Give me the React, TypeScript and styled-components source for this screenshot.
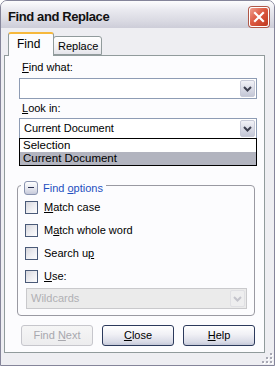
import React from 'react';
import styled, { createGlobalStyle } from 'styled-components';

const GlobalStyle = createGlobalStyle`
  html, body { margin: 0; padding: 0; background: #ffffff; }
  body { font-family: "Liberation Sans", Arial, sans-serif; font-size: 11px; color: #000; }
  * { box-sizing: border-box; }
`;

const Window = styled.div`
  width: 275px;
  height: 366px;
  border: 1px solid #85859a;
  border-radius: 7px 7px 0 0;
  background: #ececf0;
  display: flex;
  flex-direction: column;
  overflow: hidden;
`;

const TitleBar = styled.div`
  height: 27px;
  flex: none;
  display: flex;
  align-items: center;
  justify-content: space-between;
  padding: 4px 5px 0 7px;
  background: linear-gradient(#fdfdfe 0%, #e9e9ef 35%, #d9d9e2 75%, #cdcdd8 100%);
`;

const Title = styled.span`
  font-family: "Liberation Sans", Arial, sans-serif;
  font-weight: bold;
  font-size: 13px;
  letter-spacing: -0.4px;
  color: #111;
`;

const CloseButton = styled.div`
  width: 20px;
  height: 20px;
  border-radius: 3px;
  border: 1px solid #ffffff;
  box-shadow: 0 0 0 1px #b05848;
  background: linear-gradient(135deg, #f0a090 0%, #dd5a42 45%, #c0381e 100%);
  display: flex;
  align-items: center;
  justify-content: center;
`;

const Body = styled.div`
  flex: 1;
  display: flex;
  flex-direction: column;
  padding: 4px 9px 0 3px;
  background: #eeeef2;
`;

const TabRow = styled.div`
  height: 23px;
  flex: none;
  display: flex;
  align-items: flex-start;
  padding-left: 4px;
  position: relative;
  z-index: 1;
`;

const Tab = styled.div<{ $active?: boolean }>`
  height: ${(p) => (p.$active ? '24px' : '19px')};
  margin-top: ${(p) => (p.$active ? '0' : '4px')};
  margin-left: ${(p) => (p.$active ? '0' : '-1px')};
  width: ${(p) => (p.$active ? '46px' : '49px')};
  border: 1px solid #919b9c;
  border-bottom: ${(p) => (p.$active ? 'none' : '1px solid #919b9c')};
  border-top: ${(p) => (p.$active ? '2px solid #f6b83c' : '1px solid #919b9c')};
  border-radius: 3px 3px 0 0;
  background: ${(p) => (p.$active ? '#fcfcfe' : 'linear-gradient(#ffffff, #f2f2f4 60%, #e4e4ea)')};
  padding: ${(p) => (p.$active ? '4px 0 0 8px' : '3px 0 0 4px')};
  font-size: ${(p) => (p.$active ? '12px' : '11px')};
  line-height: 13px;
  position: relative;
  z-index: ${(p) => (p.$active ? 2 : 1)};
`;

const Panel = styled.div`
  flex: 1;
  border: 1px solid #919b9c;
  background: #fcfcfe;
  display: flex;
  flex-direction: column;
  padding: 5px 0 0 12px;
`;

const FieldLabel = styled.div<{ $top?: number }>`
  margin-left: 5px;
  margin-top: ${(p) => p.$top ?? 0}px;
  height: 13px;
  line-height: 13px;
`;

const Combo = styled.div<{ $disabled?: boolean; $top: number; $indent: number; $width: number }>`
  position: relative;
  width: ${(p) => p.$width}px;
  height: 21px;
  margin-top: ${(p) => p.$top}px;
  margin-left: ${(p) => p.$indent}px;
  border: 1px solid ${(p) => (p.$disabled ? '#c9c9cc' : '#8e9cb4')};
  background: ${(p) => (p.$disabled ? '#ebebeb' : '#ffffff')};
  color: ${(p) => (p.$disabled ? '#b0b0b4' : '#000')};
  display: flex;
  align-items: center;
  padding-left: 4px;
  flex: none;
`;

const ComboText = styled.span`
  flex: 1;
  line-height: 13px;
`;

const DropButton = styled.div<{ $disabled?: boolean }>`
  width: 15px;
  height: 17px;
  margin-right: 1px;
  border: 1px solid ${(p) => (p.$disabled ? '#e0e0e4' : '#c8cad8')};
  border-radius: 2px;
  background: ${(p) =>
    p.$disabled ? '#eeeeef' : 'linear-gradient(#f2f2f7, #d6d8e4 60%, #c4c7d6)'};
  display: flex;
  align-items: center;
  justify-content: center;
`;

const DropList = styled.div`
  position: absolute;
  top: 100%;
  left: -1px;
  width: 238px;
  border: 1px solid #000;
  background: #fff;
  z-index: 5;
`;

const ListItem = styled.div<{ $selected?: boolean }>`
  height: 13px;
  line-height: 13px;
  padding-left: 3px;
  background: ${(p) => (p.$selected ? '#b2b4bf' : 'transparent')};
  font-size: 11.5px;
`;

const Group = styled.fieldset`
  margin: 39px 0 0 0;
  width: 238px;
  min-width: 0;
  padding: 9px 7px 6px 7px;
  border: 1px solid #9a9aa2;
  border-radius: 4px;
  display: flex;
  flex-direction: column;
  flex: none;
`;

const Legend = styled.legend`
  padding: 0 3px;
  margin-left: -4px;
  height: 14px;
`;

const LegendInner = styled.span`
  display: inline-flex;
  align-items: center;
  gap: 5px;
  color: #1e4fc0;
  height: 14px;
  font-size: 11px;
`;

const Toggle = styled.span`
  width: 14px;
  height: 14px;
  border: 1px solid #8a94b0;
  border-radius: 3px;
  background: linear-gradient(#ffffff, #e4e6ee 55%, #c6c9da);
  display: inline-flex;
  align-items: center;
  justify-content: center;
`;

const Minus = styled.span`
  width: 6px;
  height: 1px;
  background: #2a3050;
`;

const CheckList = styled.div`
  display: flex;
  flex-direction: column;
  gap: 10px;
`;

const CheckRow = styled.label`
  display: flex;
  align-items: center;
  gap: 6px;
  height: 13px;
  line-height: 13px;
  font-size: 11px;
`;

const CheckBox = styled.span`
  width: 13px;
  height: 13px;
  flex: none;
  border: 1px solid #4a5a78;
  background: linear-gradient(135deg, #d6d6dc 0%, #ececf0 50%, #fdfdfe 100%);
`;

const ButtonRow = styled.div`
  width: 238px;
  margin-top: 9px;
  display: flex;
  justify-content: flex-end;
  gap: 9px;
`;

const Button = styled.div<{ $disabled?: boolean }>`
  width: 72px;
  height: 21px;
  border-radius: 3px;
  border: 1px solid ${(p) => (p.$disabled ? '#c6c6cc' : '#2c3a5c')};
  background: ${(p) =>
    p.$disabled
      ? 'linear-gradient(#f6f6f6, #ececee)'
      : 'linear-gradient(#ffffff 0%, #f0f0f5 45%, #d8dae6 85%, #c4c8d8 100%)'};
  color: ${(p) => (p.$disabled ? '#a8a8ae' : '#000')};
  display: flex;
  align-items: center;
  justify-content: center;
  font-size: 11px;
  line-height: 13px;
`;

const Footer = styled.div`
  height: 12px;
  flex: none;
  display: flex;
  justify-content: flex-end;
  align-items: flex-end;
  padding: 0 1px 1px 0;
  background: #eeeef2;
`;

const Chevron = ({ color }: { color: string }) => (
  <svg width="9" height="6" viewBox="0 0 9 6">
    <path d="M1 1 L4.5 4.5 L8 1" fill="none" stroke={color} strokeWidth="2" />
  </svg>
);

const Grip = () => {
  const dots: [number, number][] = [
    [9, 1],
    [5, 5],
    [9, 5],
    [1, 9],
    [5, 9],
    [9, 9],
  ];
  return (
    <svg width="12" height="12" viewBox="0 0 12 12">
      {dots.map(([x, y], i) => (
        <g key={i}>
          <rect x={x + 1} y={y + 1} width="2" height="2" fill="#ffffff" />
          <rect x={x} y={y} width="2" height="2" fill="#a8a8b4" />
        </g>
      ))}
    </svg>
  );
};

export default function App() {
  return (
    <>
      <GlobalStyle />
      <Window>
        <TitleBar>
          <Title>Find and Replace</Title>
          <CloseButton>
            <svg width="12" height="12" viewBox="0 0 12 12">
              <path d="M2 2 L10 10 M10 2 L2 10" stroke="#ffffff" strokeWidth="2.2" strokeLinecap="square" />
            </svg>
          </CloseButton>
        </TitleBar>
        <Body>
          <TabRow>
            <Tab $active>Find</Tab>
            <Tab>Replace</Tab>
          </TabRow>
          <Panel>
            <FieldLabel>
              <u>F</u>ind what:
            </FieldLabel>
            <Combo $top={4} $indent={2} $width={238}>
              <ComboText />
              <DropButton>
                <Chevron color="#3e4050" />
              </DropButton>
            </Combo>
            <FieldLabel $top={3}>
              <u>L</u>ook in:
            </FieldLabel>
            <Combo $top={3} $indent={2} $width={238}>
              <ComboText>Current Document</ComboText>
              <DropButton>
                <Chevron color="#3e4050" />
              </DropButton>
              <DropList>
                <ListItem>Selection</ListItem>
                <ListItem $selected>Current Document</ListItem>
              </DropList>
            </Combo>
            <Group>
              <Legend>
                <LegendInner>
                  <Toggle>
                    <Minus />
                  </Toggle>
                  <span>
                    Find <u>o</u>ptions
                  </span>
                </LegendInner>
              </Legend>
              <CheckList>
                <CheckRow>
                  <CheckBox />
                  <span>
                    <u>M</u>atch case
                  </span>
                </CheckRow>
                <CheckRow>
                  <CheckBox />
                  <span>
                    M<u>a</u>tch whole word
                  </span>
                </CheckRow>
                <CheckRow>
                  <CheckBox />
                  <span>
                    Search u<u>p</u>
                  </span>
                </CheckRow>
                <CheckRow>
                  <CheckBox />
                  <span>
                    <u>U</u>se:
                  </span>
                </CheckRow>
              </CheckList>
              <Combo $disabled $top={5} $indent={1} $width={221}>
                <ComboText>Wildcards</ComboText>
                <DropButton $disabled>
                  <Chevron color="#c4c4cc" />
                </DropButton>
              </Combo>
            </Group>
            <ButtonRow>
              <Button $disabled>
                <span>
                  Find <u>N</u>ext
                </span>
              </Button>
              <Button>
                <span>
                  <u>C</u>lose
                </span>
              </Button>
              <Button>
                <span>
                  <u>H</u>elp
                </span>
              </Button>
            </ButtonRow>
          </Panel>
        </Body>
        <Footer>
          <Grip />
        </Footer>
      </Window>
    </>
  );
}
